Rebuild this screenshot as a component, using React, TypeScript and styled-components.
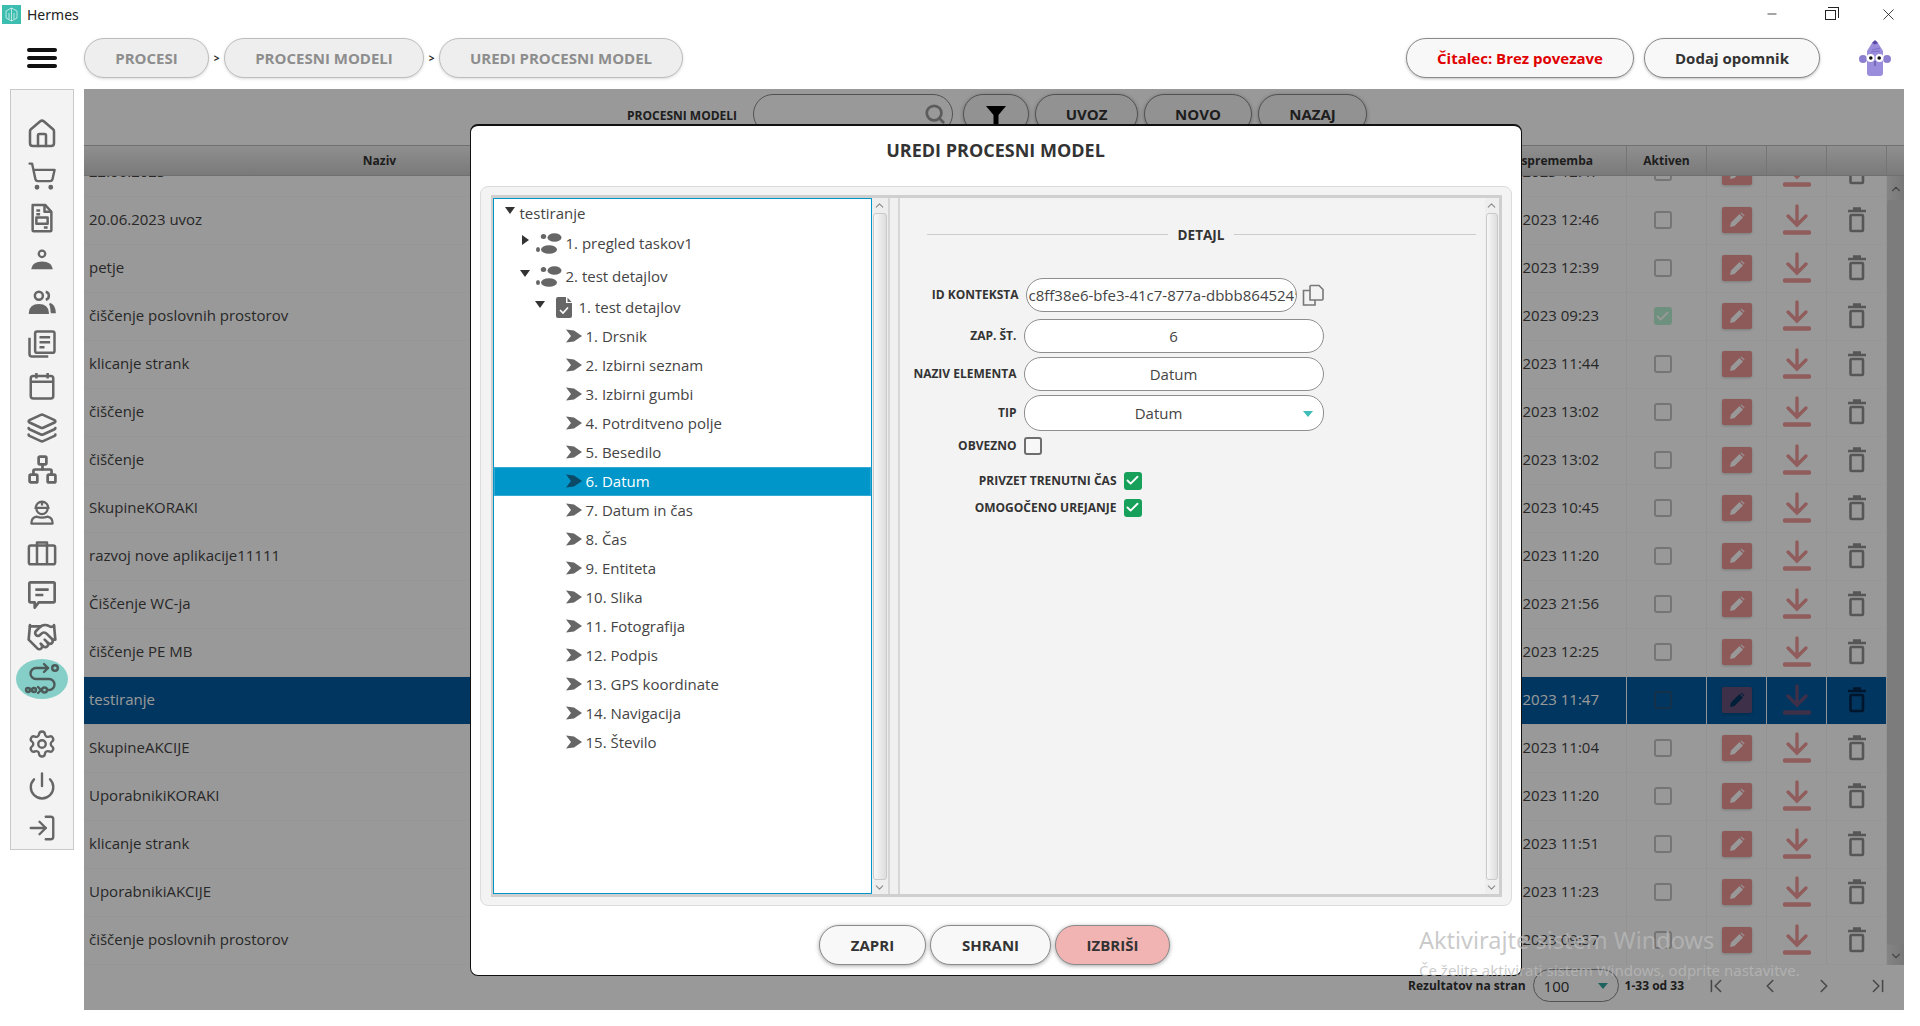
import React from 'react';
import styled, { createGlobalStyle } from 'styled-components';
import {
  Check,
  ChevronDown,
  ChevronFirst,
  ChevronLast,
  ChevronLeft,
  ChevronRight,
  ChevronUp,
  Handshake,
  House,
  Layers,
  LogIn,
  Minus,
  Network,
  Power,
  Search,
  Settings,
  ShoppingCart,
  X,
} from 'lucide-react';

const GlobalStyle = createGlobalStyle`
  html, body {
    margin: 0;
    padding: 0;
    background: #fff;
    font-family: 'Open Sans', 'Noto Sans', sans-serif;
    color: #333;
  }
  * { box-sizing: border-box; }
`;

const Page = styled.div`
  position: relative;
  width: 1920px;
  height: 1026px;
  display: flex;
  flex-direction: column;
  overflow: hidden;
  background: #fff;
`;

const TitleBar = styled.div`
  height: 30px;
  display: flex;
  align-items: center;
  padding: 0 3px 2px 2px;
  font-family: 'Noto Sans', sans-serif;
  font-size: 14px;
  color: #222;
`;

const AppLogo = styled.div`
  width: 19px;
  height: 19px;
  margin-right: 6px;
  background: #3dbdb0;
  display: flex;
  align-items: center;
  justify-content: center;
`;

const WindowButtons = styled.div`
  margin-left: auto;
  display: flex;
  color: #111;
`;

const WindowButton = styled.div`
  width: 58px;
  height: 28px;
  display: flex;
  align-items: center;
  justify-content: center;
`;

const RestoreGlyph = styled.div`
  position: relative;
  width: 11px;
  height: 10px;
  margin-top: 2px;
  border: 1px solid #222;
  &::before {
    content: '';
    position: absolute;
    top: -4px;
    left: 2px;
    width: 10px;
    height: 10px;
    border-top: 1px solid #222;
    border-right: 1px solid #222;
  }
`;

const TopBar = styled.div`
  height: 59px;
  padding: 8px 29px 11px 27px;
  display: flex;
  align-items: center;
`;

const Hamburger = styled.div`
  width: 30px;
  height: 20px;
  margin-right: 27px;
  display: flex;
  flex-direction: column;
  justify-content: space-between;
  span {
    height: 4px;
    border-radius: 2px;
    background: #111;
  }
`;

const Crumb = styled.div<{ $w: number }>`
  width: ${({ $w }) => $w}px;
  height: 40px;
  border-radius: 20px;
  border: 1px solid #bdbdbd;
  background: #eee;
  box-shadow: 0 1px 3px rgba(0, 0, 0, 0.15);
  color: #8d8d8d;
  font-size: 15px;
  font-weight: 700;
  display: flex;
  align-items: center;
  justify-content: center;
`;

const CrumbSep = styled.div`
  width: 15px;
  text-align: center;
  font-size: 10px;
  font-weight: 700;
  color: #222;
`;

const ActionPill = styled.div<{ $w: number; $danger?: boolean }>`
  width: ${({ $w }) => $w}px;
  height: 40px;
  border-radius: 20px;
  border: 1px solid #8a8a8a;
  background: #f8f8f8;
  box-shadow: 0 1px 3px rgba(0, 0, 0, 0.25);
  color: ${({ $danger }) => ($danger ? '#e00000' : '#333')};
  font-size: 15px;
  font-weight: 700;
  display: flex;
  align-items: center;
  justify-content: center;
`;

const TopRight = styled.div`
  margin-left: auto;
  display: flex;
  align-items: center;
  gap: 10px;
`;

const Avatar = styled.div`
  margin-left: 29px;
  width: 32px;
  height: 38px;
`;

const Body = styled.div`
  flex: 1;
  display: flex;
  padding: 0 16px 16px 10px;
  min-height: 0;
`;

const Sidebar = styled.nav`
  width: 64px;
  height: 761px;
  margin-right: 10px;
  padding-top: 23px;
  border: 1px solid #c9c9c9;
  background: #f3f3f3;
  display: flex;
  flex-direction: column;
  align-items: center;
  color: #666;
`;

const NavItem = styled.div<{ $active?: boolean; $gap?: number }>`
  width: ${({ $active }) => ($active ? '52px' : '100%')};
  height: ${({ $active }) => ($active ? '40px' : '42px')};
  margin-top: ${({ $gap, $active }) => ($gap || 0) + ($active ? 1 : 0)}px;
  margin-bottom: ${({ $active }) => ($active ? 1 : 0)}px;
  border-radius: 50%;
  background: ${({ $active }) => ($active ? '#86cfc8' : 'transparent')};
  color: ${({ $active }) => ($active ? '#4d5a5a' : 'inherit')};
  display: flex;
  align-items: center;
  justify-content: center;
`;

const Main = styled.main`
  position: relative;
  flex: 1;
  display: flex;
  flex-direction: column;
  background: #fff;
  min-width: 0;
`;

const ListToolbar = styled.div`
  height: 56px;
  padding: 5px 0 0 543px;
  display: flex;
  align-items: flex-start;
  gap: 6px;
`;

const ToolbarLabel = styled.div`
  width: 120px;
  height: 40px;
  font-size: 12px;
  font-weight: 700;
  color: #333;
  display: flex;
  align-items: center;
  margin-top: 1px;
`;

const SearchBox = styled.div`
  width: 200px;
  height: 40px;
  margin-right: 4px;
  padding-right: 6px;
  border-radius: 20px;
  border: 1px solid #888;
  background: #fff;
  color: #999;
  display: flex;
  align-items: center;
  justify-content: flex-end;
`;

const ToolPill = styled.div<{ $w: number }>`
  width: ${({ $w }) => $w}px;
  height: 40px;
  border-radius: 20px;
  border: 1px solid #888;
  background: #f4f4f4;
  box-shadow: 0 1px 4px rgba(0, 0, 0, 0.3);
  font-size: 15px;
  font-weight: 700;
  color: #333;
  display: flex;
  align-items: center;
  justify-content: center;
`;

const HeaderRow = styled.div`
  height: 31px;
  display: flex;
  border-top: 1px solid #bbb;
  border-bottom: 1px solid #bbb;
  background: linear-gradient(#efefef, #cbcbcb);
`;

const TableGrid = styled.div`
  width: 1803px;
  flex: none;
  display: grid;
  grid-template-columns: 592px 951px 80px 60px 60px 60px;
`;

const HeaderCell = styled.div<{ $right?: boolean }>`
  border-right: 1px solid #c4c4c4;
  font-size: 12px;
  font-weight: 700;
  color: #333;
  display: flex;
  align-items: center;
  justify-content: ${({ $right }) => ($right ? 'flex-end' : 'center')};
  padding-right: ${({ $right }) => ($right ? '33px' : '0')};
`;

const TableArea = styled.div`
  height: 789px;
  display: flex;
  overflow: hidden;
`;

const RowsClip = styled.div`
  width: 1803px;
  margin-top: -27px;
`;

const Row = styled(TableGrid)<{ $selected?: boolean }>`
  height: 48px;
  background: ${({ $selected }) => ($selected ? '#005a9e' : '#fff')};
  color: ${({ $selected }) => ($selected ? '#fff' : '#444')};
  font-size: 15px;
  box-shadow: inset 0 -1px 0 #fbfbfb;
`;

const NameCell = styled.div`
  display: flex;
  align-items: center;
  padding: 0 0 4px 5px;
  white-space: nowrap;
`;

const DateCell = styled.div`
  display: flex;
  align-items: center;
  justify-content: flex-end;
  padding: 0 27px 4px 0;
  border-right: 1px solid #f6f6f6;
`;

const IconCell = styled.div<{ $shift?: number }>`
  display: flex;
  align-items: center;
  justify-content: center;
  padding-right: ${({ $shift }) => $shift || 0}px;
  padding-bottom: 2px;
  border-right: 1px solid #f6f6f6;
`;

const RowBox = styled.div<{ $checked?: boolean; $selected?: boolean }>`
  width: 18px;
  height: 18px;
  border-radius: 3px;
  border: ${({ $checked, $selected }) => ($checked ? 'none' : `2px solid ${$selected ? '#24527a' : '#c4c4c4'}`)};
  background: ${({ $checked }) => ($checked ? '#b8f0d2' : 'transparent')};
  color: #fff;
  display: flex;
  align-items: center;
  justify-content: center;
`;

const EditTile = styled.div<{ $selected?: boolean }>`
  width: 30px;
  height: 26px;
  border-radius: 2px;
  background: ${({ $selected }) => ($selected ? '#6a507b' : '#ec9494')};
  color: ${({ $selected }) => ($selected ? '#00365f' : '#fff')};
  box-shadow: 0 1px 3px rgba(0, 0, 0, 0.2);
  display: flex;
  align-items: center;
  justify-content: center;
`;

const TableScroll = styled.div`
  width: 17px;
  height: 100%;
  background: linear-gradient(90deg, #dcdcdc, #c8c8c8);
  display: flex;
  flex-direction: column;
  align-items: center;
  justify-content: space-between;
  color: #777;
  padding: 6px 0 2px;
`;

const TableThumb = styled.div`
  flex: 1;
  width: 100%;
  margin: 4px 0;
  border-radius: 3px;
  background: #cfcfcf;
`;

const Pager = styled.div`
  flex: 1;
  display: flex;
  align-items: center;
  justify-content: flex-end;
  padding: 0 15px 4px 0;
  font-size: 12px;
  font-weight: 700;
  color: #333;
`;

const PageSize = styled.div`
  width: 86px;
  height: 33px;
  margin: 0 6px 0 7px;
  padding: 0 10px;
  border-radius: 17px;
  border: 1px solid #888;
  font-size: 15px;
  font-weight: 400;
  display: flex;
  align-items: center;
  justify-content: space-between;
`;

const TealTriangle = styled.div<{ $dark?: boolean }>`
  width: 0;
  height: 0;
  border-left: 5px solid transparent;
  border-right: 5px solid transparent;
  border-top: 6px solid ${({ $dark }) => ($dark ? '#2fa39b' : '#3dbdb5')};
`;

const PagerNav = styled.div`
  margin-left: 21px;
  display: flex;
  gap: 32px;
  color: #777;
`;

const Backdrop = styled.div`
  position: absolute;
  inset: 0;
  background: rgba(0, 0, 0, 0.4);
  display: flex;
  align-items: center;
  justify-content: center;
`;

const Modal = styled.div`
  width: 1052px;
  height: 852px;
  margin-left: 3px;
  padding: 0 9px;
  background: #fff;
  border: 1px solid #111;
  border-top-width: 2px;
  border-radius: 8px;
  display: flex;
  flex-direction: column;
`;

const ModalTitle = styled.div`
  height: 60px;
  font-size: 18px;
  font-weight: 700;
  color: #333;
  display: flex;
  align-items: center;
  justify-content: center;
  padding-bottom: 12px;
`;

const Panel = styled.div`
  height: 720px;
  padding: 8px 9px 8px 10px;
  background: #f3f3f3;
  border: 1px solid #dcdcdc;
  border-radius: 8px;
`;

const Split = styled.div`
  height: 100%;
  display: flex;
  border: 3px solid #cfcfcf;
  border-left-width: 2px;
  border-right-width: 3px;
`;

const TreeBox = styled.div`
  width: 379px;
  padding-top: 1px;
  background: #fff;
  border: 1px solid #0096c9;
  overflow: hidden;
  font-size: 15px;
  color: #444;
`;

const TreeRow = styled.div<{ $indent: number; $h: number; $selected?: boolean }>`
  height: ${({ $h }) => $h}px;
  padding-left: ${({ $indent }) => $indent}px;
  display: flex;
  align-items: center;
  white-space: nowrap;
  color: ${({ $selected }) => ($selected ? '#fff' : '#444')};
  background: ${({ $selected }) => ($selected ? '#0096c9' : 'transparent')};
  box-shadow: ${({ $selected }) => ($selected ? 'inset 0 0 0 1px #35aad3' : 'none')};
`;

const Caret = styled.div<{ $open?: boolean }>`
  width: 0;
  height: 0;
  margin: -6px 5px 0 0;
  ${({ $open }) =>
    $open
      ? `border-left: 5px solid transparent; border-right: 5px solid transparent; border-top: 7px solid #333;`
      : `border-top: 5px solid transparent; border-bottom: 5px solid transparent; border-left: 7px solid #333; margin-left: 1px; margin-right: 6px;`}
`;

const TreeIcon = styled.span<{ $ml?: number; $mr: number }>`
  display: flex;
  margin-left: ${({ $ml }) => $ml || 0}px;
  margin-right: ${({ $mr }) => $mr}px;
`;

const ScrollTrack = styled.div<{ $w: number }>`
  width: ${({ $w }) => $w}px;
  flex: none;
  padding: 1px 1px 0;
  background: #eee;
  color: #8a8a8a;
  display: flex;
  flex-direction: column;
  align-items: center;
`;

const ScrollThumb = styled.div`
  flex: 1;
  width: 100%;
  margin: 1px 0;
  border: 1px solid #c9c9c9;
  border-radius: 3px;
  background: linear-gradient(90deg, #f7f7f7, #dedede);
`;

const SplitDivider = styled.div`
  width: 12px;
  flex: none;
  background: #f0f0f0;
  border-left: 2px solid #d6d6d6;
  border-right: 2px solid #d6d6d6;
`;

const Detail = styled.div`
  flex: 1;
  display: flex;
  background: #f3f3f3;
  min-width: 0;
`;

const DetailForm = styled.div`
  flex: 1;
  padding-top: 25px;
`;

const DetailHeading = styled.div`
  height: 24px;
  margin: 0 9px 31px 27px;
  display: flex;
  align-items: center;
  gap: 10px;
  font-size: 13.500px;
  font-weight: 700;
  color: #333;
  &::before,
  &::after {
    content: '';
    height: 1px;
    background: #ccc;
  }
  &::before { flex: 243; }
  &::after { flex: 243; }
`;

const FormRow = styled.div<{ $top?: number }>`
  margin-top: ${({ $top }) => $top || 0}px;
  display: flex;
  align-items: center;
`;

const FieldLabel = styled.div<{ $w?: number }>`
  width: ${({ $w }) => $w || 117}px;
  margin-right: 7px;
  text-align: right;
  font-size: 12px;
  font-weight: 700;
  white-space: nowrap;
  color: #333;
`;

const Field = styled.div<{ $w?: number; $h?: number }>`
  width: ${({ $w }) => $w || 300}px;
  height: ${({ $h }) => $h || 34}px;
  border-radius: 17px;
  border: 1px solid #8e8e8e;
  background: #fff;
  font-size: 15px;
  color: #444;
  display: flex;
  align-items: center;
  justify-content: center;
`;

const IdField = styled(Field)`
  justify-content: flex-start;
  padding-left: 2px;
  overflow: hidden;
  white-space: nowrap;
`;

const SelectField = styled(Field)`
  position: relative;
  padding-right: 30px;
  & > div {
    position: absolute;
    right: 10px;
    top: 15px;
  }
`;

const CopyButton = styled.div`
  margin-left: 5px;
  color: #777;
  display: flex;
`;

const CheckBox = styled.div<{ $checked?: boolean }>`
  width: 18px;
  height: 18px;
  border-radius: 3px;
  border: ${({ $checked }) => ($checked ? 'none' : '2px solid #6e6e6e')};
  background: ${({ $checked }) => ($checked ? '#16a05a' : '#f7f7f7')};
  color: #fff;
  display: flex;
  align-items: center;
  justify-content: center;
`;

const ModalFooter = styled.div`
  margin-top: 19px;
  display: flex;
  justify-content: center;
  gap: 4px;
  padding-right: 2px;
`;

const ModalButton = styled.div<{ $w: number; $danger?: boolean }>`
  width: ${({ $w }) => $w}px;
  height: 40px;
  border-radius: 20px;
  border: 1px solid #8a8a8a;
  background: ${({ $danger }) => ($danger ? '#f2b3b3' : '#f8f8f8')};
  box-shadow: 0 1px 4px rgba(0, 0, 0, 0.35);
  font-size: 15px;
  font-weight: 700;
  color: #333;
  display: flex;
  align-items: center;
  justify-content: center;
`;

const Watermark = styled.div`
  position: absolute;
  left: 1419px;
  top: 923px;
  font-family: 'Noto Sans', sans-serif;
  color: rgba(185, 185, 185, 0.75);
  white-space: nowrap;
  pointer-events: none;
`;

const WatermarkTitle = styled.div`
  font-size: 23.500px;
  line-height: 34px;
`;

const WatermarkText = styled.div`
  font-size: 15px;
  line-height: 24px;
  margin-top: 1px;
`;

const DocFormIcon = () => (
  <svg width="30" height="30" viewBox="0 0 24 24" fill="none" stroke="currentColor" strokeWidth="2" strokeLinejoin="round">
    <path d="M4.500 1.500h10l5 5.500v14.500a1 1 0 0 1-1 1h-13a1 1 0 0 1-1-1V2.500a1 1 0 0 1 1-1z" />
    <path d="M14 1.500V7h5.500M7.500 6h3M7.500 9h3M13.500 19.500h3" />
    <rect x="7.500" y="11.500" width="9" height="5" />
  </svg>
);

const PersonIcon = () => (
  <svg width="30" height="30" viewBox="0 0 24 24" fill="none" stroke="currentColor" strokeWidth="1.800">
    <circle cx="12" cy="7" r="2.600" />
    <path d="M4.500 18.500c.6-3 3.600-4.500 7.500-4.500s6.900 1.500 7.500 4.500z" fill="currentColor" />
  </svg>
);

const PeopleIcon = () => (
  <svg width="30" height="30" viewBox="0 0 24 24" fill="none" stroke="currentColor" strokeWidth="2">
    <circle cx="9.500" cy="7" r="3.200" />
    <path d="M15 3.800a3.300 3.300 0 0 1 0 6.400" />
    <path d="M2.500 20.500c.2-4 3-6 7-6s6.800 2 7 6z" fill="currentColor" />
    <path d="M18 13.500c2.300.7 3.700 2.800 4 6.500h-3" fill="currentColor" />
  </svg>
);

const ArticleIcon = () => (
  <svg width="30" height="30" viewBox="0 0 24 24" fill="none" stroke="currentColor" strokeWidth="2" strokeLinejoin="round">
    <rect x="6.500" y="2" width="15.500" height="17" rx="1.500" />
    <path d="M2 7v13a2 2 0 0 0 2 2h13" />
    <path d="M10 6.500h8.500M10 10.500h8.500M10 14.500h4" />
  </svg>
);

const CalendarIcon = () => (
  <svg width="30" height="30" viewBox="0 0 24 24" fill="none" stroke="currentColor" strokeWidth="2" strokeLinejoin="round">
    <rect x="3" y="4" width="18" height="18" rx="2" />
    <path d="M3 8.500h18M7.500 1.500v4.500M16.500 1.500v4.500" />
  </svg>
);

const WorkerIcon = () => (
  <svg width="30" height="30" viewBox="0 0 24 24" fill="none" stroke="currentColor" strokeWidth="1.800" strokeLinejoin="round">
    <path d="M7 9.500a5 5 0 0 1 10 0M6 9.500h12M12 4.500v3" />
    <path d="M7.500 10a4.500 4.500 0 0 0 9 0" />
    <path d="M3.500 22c0-3 1.500-5 4-5.500 3 1 6 1 9 0 2.500.5 4 2.500 4 5.500z" />
  </svg>
);

const SuitcaseIcon = () => (
  <svg width="32" height="30" viewBox="0 0 24 24" fill="none" stroke="currentColor" strokeWidth="2" strokeLinejoin="round">
    <rect x="1.500" y="6" width="21" height="15" rx="1.500" />
    <path d="M8 21V3.500h8V21" />
  </svg>
);

const BubbleIcon = () => (
  <svg width="32" height="32" viewBox="0 0 24 24" fill="none" stroke="currentColor" strokeWidth="2" strokeLinejoin="round">
    <path d="M3.500 2.500h17a1 1 0 0 1 1 1v13a1 1 0 0 1-1 1h-11l-3 4v-4h-3a1 1 0 0 1-1-1v-13a1 1 0 0 1 1-1z" />
    <path d="M7 8h10M7 12h6" />
  </svg>
);

const RouteIcon = () => (
  <svg width="38" height="36" viewBox="0 0 38 36" fill="none" stroke="currentColor" strokeWidth="2.400" strokeLinecap="round" strokeLinejoin="round">
    <path d="M25 7H13a5.500 5.500 0 0 0 0 11h13a5.500 5.500 0 0 1 0 11h-2" />
    <path d="M21 3l4 4-4 4" />
    <circle cx="32" cy="7" r="2.800" />
    <circle cx="5" cy="29" r="2" />
    <circle cx="11" cy="29" r="2" />
    <path d="M15 26l3 3-3 3" />
    <circle cx="21.500" cy="29" r="2.500" />
  </svg>
);

const StepsIcon = () => (
  <svg width="26" height="21" viewBox="0 0 26 21" fill="#666">
    <ellipse cx="18.500" cy="4.500" rx="7" ry="4.300" />
    <ellipse cx="7.500" cy="3.500" rx="2.700" ry="2.500" />
    <ellipse cx="13" cy="16.500" rx="8" ry="4.300" />
    <ellipse cx="2" cy="16.500" rx="2" ry="2.500" />
  </svg>
);

const TaskDocIcon = () => (
  <svg width="16" height="21" viewBox="0 0 16 21">
    <path d="M2 0h8v6h6v13a2 2 0 0 1-2 2H2a2 2 0 0 1-2-2V2a2 2 0 0 1 2-2z" fill="#666" />
    <path d="M11.500 0.500l4 4.500h-4z" fill="#666" />
    <path d="M4 13l3 3 5-5.500" fill="none" stroke="#fff" strokeWidth="1.600" />
  </svg>
);

const LeafArrow = ({ color }: { color: string }) => (
  <svg width="16" height="14" viewBox="0 0 16 14" fill={color}>
    <path d="M0 0.500L8 1.500L16 7L8 12.500L0 13.500L5 7z" />
  </svg>
);

const PencilGlyph = () => (
  <svg width="16" height="16" viewBox="0 0 16 16" fill="currentColor">
    <path d="M1 15l1-4.500L10.500 2l3.500 3.500L5.500 14z" />
    <path d="M11.500 1l1-.5 3 3-.5 1z" />
  </svg>
);

const DownloadGlyph = ({ color }: { color: string }) => (
  <svg width="28" height="32" viewBox="0 0 28 32" fill="none" stroke={color} strokeWidth="3.400" strokeLinecap="round">
    <path d="M14 2v19M5 12l9 9 9-9" />
    <path d="M2 28.500h24" strokeWidth="4.500" />
  </svg>
);

const TrashGlyph = ({ color }: { color: string }) => (
  <svg width="18" height="26" viewBox="0 0 18 26" fill="none" stroke={color} strokeWidth="2.600">
    <path d="M0 4h18M5 1.500h8" />
    <rect x="2.500" y="8" width="12.500" height="16" rx="1" />
  </svg>
);

const FilterGlyph = () => (
  <svg width="22" height="22" viewBox="0 0 22 22" fill="#000">
    <path d="M1 3h20l-7.500 9v9h-5v-9z" />
  </svg>
);

const CopyGlyph = () => (
  <svg width="22" height="22" viewBox="0 0 22 22" fill="none" stroke="currentColor" strokeWidth="1.600">
    <path d="M8 16V2.500a1 1 0 0 1 1-1h8l4 4V15a1 1 0 0 1-1 1z" fill="#f3f3f3" />
    <path d="M8 6.500H1.500V21H13v-5" />
  </svg>
);

const HermesLogo = () => (
  <svg width="15" height="15" viewBox="0 0 15 15" fill="none" stroke="#d9f3ef" strokeWidth="0.800">
    <path d="M7.500 1l5.500 3v7l-5.500 3-5.500-3V4zM7.500 1v13M5 6v6M10 6v6" />
  </svg>
);

const AvatarFigure = () => (
  <svg width="32" height="38" viewBox="0 0 32 38">
    <circle cx="4" cy="20" r="4" fill="#8d7fd0" />
    <circle cx="28" cy="20" r="4" fill="#8d7fd0" />
    <path d="M8 12l5-8 2-2h2l2 2 5 8v22a3 3 0 0 1-3 3H11a3 3 0 0 1-3-3z" fill="#9a8ddc" />
    <path d="M13 4l3-3 3 3-3 1.500z" fill="#5c4aa6" />
    <path d="M13 11l8-2M12 13l9-1" stroke="#6f60b8" strokeWidth="0.700" />
    <circle cx="11.500" cy="19" r="4" fill="#fff" />
    <circle cx="20.500" cy="19" r="4" fill="#fff" />
    <circle cx="11.800" cy="19" r="1.800" fill="#111" />
    <circle cx="20.200" cy="19" r="1.800" fill="#111" />
    <path d="M16 22v5" stroke="#3f3478" strokeWidth="0.800" />
  </svg>
);

const navTop = [
  <House size={32} strokeWidth={1.9} />,
  <ShoppingCart size={30} strokeWidth={1.9} />,
  <DocFormIcon />,
  <PersonIcon />,
  <PeopleIcon />,
  <ArticleIcon />,
  <CalendarIcon />,
  <Layers size={32} strokeWidth={2} />,
  <Network size={31} strokeWidth={2.1} />,
  <WorkerIcon />,
  <SuitcaseIcon />,
  <BubbleIcon />,
  <Handshake size={32} strokeWidth={2} />,
];

const rows = [
  { name: '22.06.2023', date: '2023 12:47' },
  { name: '20.06.2023 uvoz', date: '2023 12:46' },
  { name: 'petje', date: '2023 12:39' },
  { name: 'čiščenje poslovnih prostorov', date: '2023 09:23', active: true },
  { name: 'klicanje strank', date: '2023 11:44' },
  { name: 'čiščenje', date: '2023 13:02' },
  { name: 'čiščenje', date: '2023 13:02' },
  { name: 'SkupineKORAKI', date: '2023 10:45' },
  { name: 'razvoj nove aplikacije11111', date: '2023 11:20' },
  { name: 'Čiščenje WC-ja', date: '2023 21:56' },
  { name: 'čiščenje PE MB', date: '2023 12:25' },
  { name: 'testiranje', date: '2023 11:47', selected: true },
  { name: 'SkupineAKCIJE', date: '2023 11:04' },
  { name: 'UporabnikiKORAKI', date: '2023 11:20' },
  { name: 'klicanje strank', date: '2023 11:51' },
  { name: 'UporabnikiAKCIJE', date: '2023 11:23' },
  { name: 'čiščenje poslovnih prostorov', date: '2023 09:37' },
];

const leaves = [
  '1. Drsnik',
  '2. Izbirni seznam',
  '3. Izbirni gumbi',
  '4. Potrditveno polje',
  '5. Besedilo',
  '6. Datum',
  '7. Datum in čas',
  '8. Čas',
  '9. Entiteta',
  '10. Slika',
  '11. Fotografija',
  '12. Podpis',
  '13. GPS koordinate',
  '14. Navigacija',
  '15. Število',
];

const ScrollBar = ({ w }: { w: number }) => (
  <ScrollTrack $w={w}>
    <ChevronUp size={13} />
    <ScrollThumb />
    <ChevronDown size={13} />
  </ScrollTrack>
);

export default function App() {
  return (
    <Page>
      <GlobalStyle />
      <TitleBar>
        <AppLogo>
          <HermesLogo />
        </AppLogo>
        Hermes
        <WindowButtons>
          <WindowButton>
            <Minus size={14} strokeWidth={1.3} />
          </WindowButton>
          <WindowButton>
            <RestoreGlyph />
          </WindowButton>
          <WindowButton>
            <X size={19} strokeWidth={1} />
          </WindowButton>
        </WindowButtons>
      </TitleBar>

      <TopBar>
        <Hamburger>
          <span />
          <span />
          <span />
        </Hamburger>
        <Crumb $w={125}>PROCESI</Crumb>
        <CrumbSep>&gt;</CrumbSep>
        <Crumb $w={200}>PROCESNI MODELI</Crumb>
        <CrumbSep>&gt;</CrumbSep>
        <Crumb $w={244}>UREDI PROCESNI MODEL</Crumb>
        <TopRight>
          <ActionPill $w={228} $danger>
            Čitalec: Brez povezave
          </ActionPill>
          <ActionPill $w={176}>Dodaj opomnik</ActionPill>
          <Avatar>
            <AvatarFigure />
          </Avatar>
        </TopRight>
      </TopBar>

      <Body>
        <Sidebar>
          {navTop.map((icon, i) => (
            <NavItem key={i}>{icon}</NavItem>
          ))}
          <NavItem $active>
            <RouteIcon />
          </NavItem>
          <NavItem $gap={23}>
            <Settings size={30} strokeWidth={1.9} />
          </NavItem>
          <NavItem>
            <Power size={30} strokeWidth={1.9} />
          </NavItem>
          <NavItem>
            <LogIn size={30} strokeWidth={1.9} />
          </NavItem>
        </Sidebar>

        <Main>
          <ListToolbar>
            <ToolbarLabel>PROCESNI MODELI</ToolbarLabel>
            <SearchBox>
              <Search size={22} strokeWidth={3} />
            </SearchBox>
            <ToolPill $w={66}>
              <FilterGlyph />
            </ToolPill>
            <ToolPill $w={103}>UVOZ</ToolPill>
            <ToolPill $w={108}>NOVO</ToolPill>
            <ToolPill $w={109}>NAZAJ</ToolPill>
          </ListToolbar>

          <HeaderRow>
            <TableGrid>
              <HeaderCell>Naziv</HeaderCell>
              <HeaderCell $right>sprememba</HeaderCell>
              <HeaderCell>Aktiven</HeaderCell>
              <HeaderCell />
              <HeaderCell />
              <HeaderCell />
            </TableGrid>
          </HeaderRow>

          <TableArea>
            <RowsClip>
              {rows.map((row, i) => (
                <Row key={i} $selected={row.selected}>
                  <NameCell>{row.name}</NameCell>
                  <DateCell>{row.date}</DateCell>
                  <IconCell $shift={8}>
                    <RowBox $checked={row.active} $selected={row.selected}>
                      {row.active && <Check size={15} strokeWidth={3} />}
                    </RowBox>
                  </IconCell>
                  <IconCell>
                    <EditTile $selected={row.selected}>
                      <PencilGlyph />
                    </EditTile>
                  </IconCell>
                  <IconCell>
                    <DownloadGlyph color={row.selected ? '#6a507b' : '#f09999'} />
                  </IconCell>
                  <IconCell>
                    <TrashGlyph color={row.selected ? '#00254a' : '#909090'} />
                  </IconCell>
                </Row>
              ))}
            </RowsClip>
            <TableScroll>
              <ChevronUp size={14} />
              <TableThumb />
              <ChevronDown size={14} />
            </TableScroll>
          </TableArea>

          <Pager>
            Rezultatov na stran
            <PageSize>
              100
              <TealTriangle $dark />
            </PageSize>
            1-33 od 33
            <PagerNav>
              <ChevronFirst size={22} strokeWidth={1.7} />
              <ChevronLeft size={22} strokeWidth={1.7} />
              <ChevronRight size={22} strokeWidth={1.7} />
              <ChevronLast size={22} strokeWidth={1.7} />
            </PagerNav>
          </Pager>

          <Backdrop>
            <Modal>
              <ModalTitle>UREDI PROCESNI MODEL</ModalTitle>
              <Panel>
                <Split>
                  <TreeBox>
                    <TreeRow $indent={11} $h={27}>
                      <Caret $open />
                      testiranje
                    </TreeRow>
                    <TreeRow $indent={27} $h={33}>
                      <Caret />
                      <TreeIcon $ml={1} $mr={4}>
                        <StepsIcon />
                      </TreeIcon>
                      1. pregled taskov1
                    </TreeRow>
                    <TreeRow $indent={26} $h={33}>
                      <Caret $open />
                      <TreeIcon $ml={1} $mr={4}>
                        <StepsIcon />
                      </TreeIcon>
                      2. test detajlov
                    </TreeRow>
                    <TreeRow $indent={41} $h={29}>
                      <Caret $open />
                      <TreeIcon $ml={6} $mr={7}>
                        <TaskDocIcon />
                      </TreeIcon>
                      1. test detajlov
                    </TreeRow>
                    {leaves.map((leaf) => {
                      const selected = leaf === '6. Datum';
                      return (
                        <TreeRow key={leaf} $indent={72} $h={29} $selected={selected}>
                          <TreeIcon $mr={4}>
                            <LeafArrow color={selected ? '#0b4a66' : '#666'} />
                          </TreeIcon>
                          {leaf}
                        </TreeRow>
                      );
                    })}
                  </TreeBox>
                  <ScrollBar w={16} />
                  <SplitDivider />
                  <Detail>
                    <DetailForm>
                      <DetailHeading>DETAJL</DetailHeading>
                      <FormRow>
                        <FieldLabel $w={119}>ID KONTEKSTA</FieldLabel>
                        <IdField $w={271}>c8ff38e6-bfe3-41c7-877a-dbbb86452455</IdField>
                        <CopyButton>
                          <CopyGlyph />
                        </CopyButton>
                      </FormRow>
                      <FormRow $top={7}>
                        <FieldLabel>ZAP. ŠT.</FieldLabel>
                        <Field>6</Field>
                      </FormRow>
                      <FormRow $top={4}>
                        <FieldLabel>NAZIV ELEMENTA</FieldLabel>
                        <Field>Datum</Field>
                      </FormRow>
                      <FormRow $top={4}>
                        <FieldLabel>TIP</FieldLabel>
                        <SelectField $h={36}>
                          Datum
                          <TealTriangle />
                        </SelectField>
                      </FormRow>
                      <FormRow $top={6}>
                        <FieldLabel>OBVEZNO</FieldLabel>
                        <CheckBox />
                      </FormRow>
                      <FormRow $top={17}>
                        <FieldLabel $w={217}>PRIVZET TRENUTNI ČAS</FieldLabel>
                        <CheckBox $checked>
                          <Check size={15} strokeWidth={3} />
                        </CheckBox>
                      </FormRow>
                      <FormRow $top={9}>
                        <FieldLabel $w={217}>OMOGOČENO UREJANJE</FieldLabel>
                        <CheckBox $checked>
                          <Check size={15} strokeWidth={3} />
                        </CheckBox>
                      </FormRow>
                    </DetailForm>
                    <ScrollBar w={14} />
                  </Detail>
                </Split>
              </Panel>
              <ModalFooter>
                <ModalButton $w={107}>ZAPRI</ModalButton>
                <ModalButton $w={121}>SHRANI</ModalButton>
                <ModalButton $w={115} $danger>
                  IZBRIŠI
                </ModalButton>
              </ModalFooter>
            </Modal>
          </Backdrop>
        </Main>
      </Body>

      <Watermark>
        <WatermarkTitle>Aktivirajte sistem Windows</WatermarkTitle>
        <WatermarkText>Če želite aktivirati sistem Windows, odprite nastavitve.</WatermarkText>
      </Watermark>
    </Page>
  );
}
